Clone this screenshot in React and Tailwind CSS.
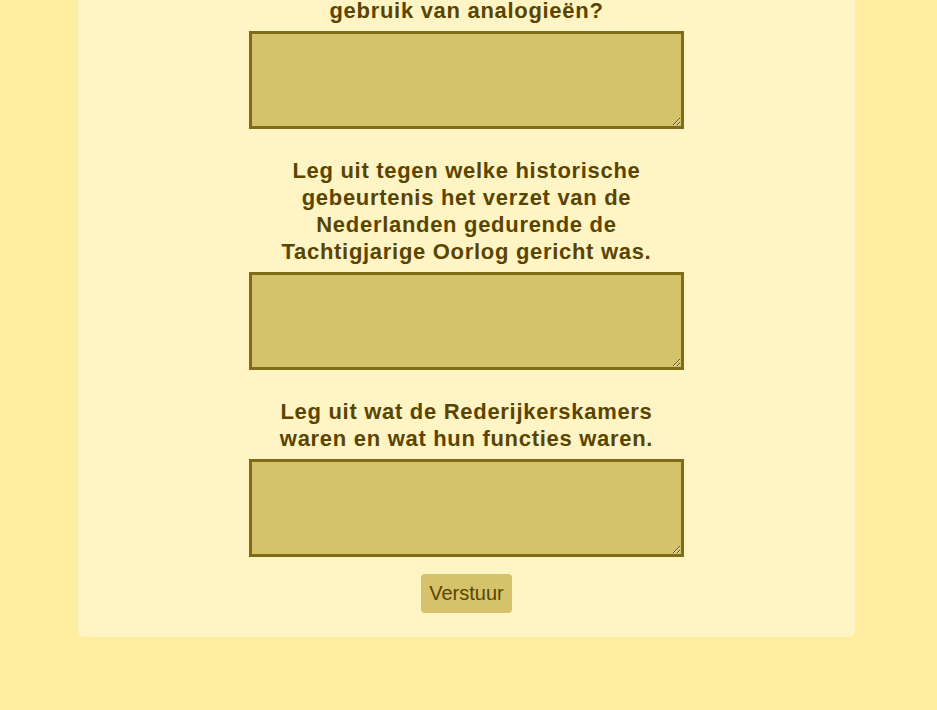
import React from 'react';

const questions = [
    'Leg uit tegen welke historische gebeurtenis het verzet van de Nederlanden gedurende de Tachtigjarige Oorlog gericht was.',
    'Leg uit wat de Rederijkerskamers waren en wat hun functies waren.',
];

const Question = ({ text, first }) => (
    <div className={`flex flex-col items-center w-[435px] ${first ? '' : 'mt-[28px]'}`}>
        <h2 className="text-[22px] leading-[27px] tracking-[0.7px] font-bold text-center text-[#5a4500] mb-[7px]">{text}</h2>
        <textarea className="block w-[435px] h-[98px] bg-[#d4c36b] border-[3px] border-solid border-[#806b16] outline-none" />
    </div>
);

const App = () => {
    return (
        <div className="min-h-screen w-full bg-[#ffeda0] overflow-hidden" style={{ fontFamily: '"Liberation Sans", Arial, sans-serif' }}>
            <div className="ml-[78px] w-[777px] bg-[#fff4c4] rounded-b-md flex flex-col items-center pb-[24px] -mt-[3px]">
                <Question first text="gebruik van analogieën?" />
                {questions.map((q) => (
                    <Question key={q} text={q} />
                ))}
                <button className="mt-[17px] bg-[#d4c36b] text-[#5a4500] text-[20px] leading-[23px] px-2 py-2 rounded">
                    Verstuur
                </button>
            </div>
        </div>
    );
};

export default App;
